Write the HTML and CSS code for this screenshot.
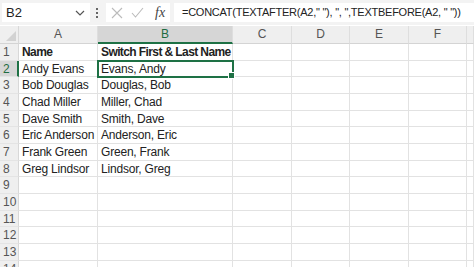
FILE: index.html
```html
<!DOCTYPE html>
<html lang="en">
<head>
  <meta charset="UTF-8" />
  <title>Switch First &amp; Last Name</title>
  <link rel="stylesheet" href="styles.css">
</head>
<body>

  <div class="toolbar">
    <div class="name-box">
      <span>B2</span>
      <svg class="chevron" width="10" height="6" viewBox="0 0 10 6"><path d="M1 1 L5 5 L9 1" fill="none" stroke="#555" stroke-width="1.2"/></svg>
    </div>
    <div class="grip"><i></i><i></i><i></i></div>
    <div class="fx-box">
      <svg width="12" height="12" viewBox="0 0 12 12"><path d="M1 1 L11 11 M11 1 L1 11" stroke="#bbb" stroke-width="1.1" fill="none"/></svg>
      <svg width="13" height="11" viewBox="0 0 13 11"><path d="M1 6 L4.5 10 L12 1" stroke="#bbb" stroke-width="1.1" fill="none"/></svg>
      <span class="fx">fx</span>
    </div>
    <div class="formula">=CONCAT(TEXTAFTER(A2," "), ", ",TEXTBEFORE(A2, " "))</div>
  </div>

  <div class="sheet">
    <div class="corner"></div>
    <div class="col-head">A</div>
    <div class="col-head active">B</div>
    <div class="col-head">C</div>
    <div class="col-head">D</div>
    <div class="col-head">E</div>
    <div class="col-head">F</div>
    <div class="col-head"></div>

    <div class="row-head">1</div>
    <div class="cell bold">Name</div>
    <div class="cell bold">Switch First &amp; Last Name</div>
    <div class="cell"></div><div class="cell"></div><div class="cell"></div><div class="cell"></div><div class="cell"></div>

    <div class="row-head active">2</div>
    <div class="cell">Andy Evans</div>
    <div class="cell selected">Evans, Andy</div>
    <div class="cell"></div><div class="cell"></div><div class="cell"></div><div class="cell"></div><div class="cell"></div>

    <div class="row-head">3</div>
    <div class="cell">Bob Douglas</div>
    <div class="cell">Douglas, Bob</div>
    <div class="cell"></div><div class="cell"></div><div class="cell"></div><div class="cell"></div><div class="cell"></div>

    <div class="row-head">4</div>
    <div class="cell">Chad Miller</div>
    <div class="cell">Miller, Chad</div>
    <div class="cell"></div><div class="cell"></div><div class="cell"></div><div class="cell"></div><div class="cell"></div>

    <div class="row-head">5</div>
    <div class="cell">Dave Smith</div>
    <div class="cell">Smith, Dave</div>
    <div class="cell"></div><div class="cell"></div><div class="cell"></div><div class="cell"></div><div class="cell"></div>

    <div class="row-head">6</div>
    <div class="cell">Eric Anderson</div>
    <div class="cell">Anderson, Eric</div>
    <div class="cell"></div><div class="cell"></div><div class="cell"></div><div class="cell"></div><div class="cell"></div>

    <div class="row-head">7</div>
    <div class="cell">Frank Green</div>
    <div class="cell">Green, Frank</div>
    <div class="cell"></div><div class="cell"></div><div class="cell"></div><div class="cell"></div><div class="cell"></div>

    <div class="row-head">8</div>
    <div class="cell">Greg Lindsor</div>
    <div class="cell">Lindsor, Greg</div>
    <div class="cell"></div><div class="cell"></div><div class="cell"></div><div class="cell"></div><div class="cell"></div>

    <div class="row-head">9</div>
    <div class="cell"></div><div class="cell"></div><div class="cell"></div><div class="cell"></div><div class="cell"></div><div class="cell"></div><div class="cell"></div>
    <div class="row-head">10</div>
    <div class="cell"></div><div class="cell"></div><div class="cell"></div><div class="cell"></div><div class="cell"></div><div class="cell"></div><div class="cell"></div>
    <div class="row-head">11</div>
    <div class="cell"></div><div class="cell"></div><div class="cell"></div><div class="cell"></div><div class="cell"></div><div class="cell"></div><div class="cell"></div>
    <div class="row-head">12</div>
    <div class="cell"></div><div class="cell"></div><div class="cell"></div><div class="cell"></div><div class="cell"></div><div class="cell"></div><div class="cell"></div>
    <div class="row-head">13</div>
    <div class="cell"></div><div class="cell"></div><div class="cell"></div><div class="cell"></div><div class="cell"></div><div class="cell"></div><div class="cell"></div>
    <div class="row-head">14</div>
    <div class="cell"></div><div class="cell"></div><div class="cell"></div><div class="cell"></div><div class="cell"></div><div class="cell"></div><div class="cell"></div>
  </div>

</body>
</html>
```

FILE: styles.css
```css
* {
  box-sizing: border-box;
}

body {
  margin: 0;
  width: 474px;
  height: 267px;
  overflow: hidden;
  background: #fff;
  font-family: 'Liberation Sans', Arial, sans-serif;
  color: #222;
}

.toolbar {
  display: flex;
  align-items: center;
  height: 25px;
  padding: 2px 0 2px 2px;
  background: #f3f3f3;
}

.name-box {
  display: flex;
  align-items: center;
  justify-content: space-between;
  width: 88px;
  height: 19px;
  padding: 0 5px 0 4px;
  background: #fff;
  font-size: 13px;
}

.chevron {
  margin-top: 1px;
}

.grip {
  display: flex;
  flex-direction: column;
  gap: 2px;
  margin: 0 8px 0 6px;
}

.grip i {
  display: block;
  width: 2px;
  height: 2px;
  background: #666;
}

.fx-box {
  display: flex;
  align-items: center;
  gap: 8px;
  width: 64px;
  height: 19px;
  padding-left: 5px;
  background: #fff;
}

.fx {
  font-family: 'Liberation Serif', 'Times New Roman', serif;
  font-style: italic;
  font-size: 14px;
  color: #444;
  margin-left: 3px;
}

.formula {
  flex: 1;
  height: 19px;
  margin-left: 4px;
  padding-left: 8px;
  background: #fff;
  font-size: 11px;
  letter-spacing: -0.25px;
  line-height: 19px;
  white-space: nowrap;
  overflow: hidden;
}

.sheet {
  display: grid;
  grid-template-columns: 19px 79px 135px 59px 58px 59px 58px 1fr;
  grid-template-rows: 18px repeat(14, 16.67px);
  margin-top: 1px;
}

.corner {
  background: #efefef;
  border-right: 1px solid #d8d8d8;
  border-bottom: 1px solid #d4d4d4;
  position: relative;
}

.corner::after {
  content: '';
  position: absolute;
  right: 2px;
  bottom: 2px;
  border-style: solid;
  border-width: 0 0 10px 10px;
  border-color: transparent transparent #d2d2d2 transparent;
}

.col-head {
  background: #efefef;
  border-right: 1px solid #dedede;
  border-bottom: 1px solid #d4d4d4;
  text-align: center;
  font-size: 12px;
  line-height: 17px;
  color: #555;
}

.col-head.active {
  background: #d6d6d6;
  color: #1e6c41;
  border-bottom: 2px solid #1e7145;
}

.row-head {
  background: #efefef;
  border-right: 1px solid #d8d8d8;
  border-bottom: 1px solid #e4e4e4;
  padding-left: 3px;
  font-size: 12px;
  line-height: 17px;
  color: #555;
}

.row-head.active {
  background: #d6d6d6;
  color: #1e6c41;
  border-right: 2px solid #1e7145;
}

.cell {
  border-right: 1px solid #e2e2e2;
  border-bottom: 1px solid #e2e2e2;
  padding-left: 3px;
  font-size: 12px;
  letter-spacing: -0.2px;
  line-height: 17px;
  white-space: nowrap;
  overflow: visible;
}

.bold {
  font-weight: bold;
  letter-spacing: -0.6px;
}

.selected {
  position: relative;
  outline: 2px solid #1e7145;
  outline-offset: -1px;
}

.selected::after {
  content: '';
  position: absolute;
  right: -3px;
  bottom: -3px;
  width: 5px;
  height: 5px;
  background: #1e7145;
  border: 1px solid #fff;
}
```
